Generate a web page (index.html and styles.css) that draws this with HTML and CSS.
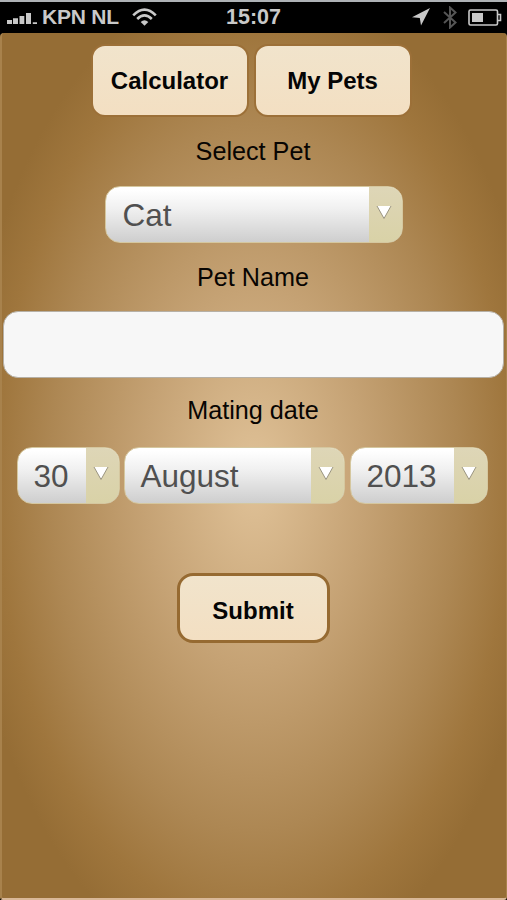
FILE: index.html
```html
<!DOCTYPE html>
<html lang="en">
<head>
<meta charset="utf-8">
<title>Pet Calculator</title>
<link rel="stylesheet" href="styles.css">
</head>
<body>
<header class="status">
  <div class="carrier">
    <svg class="signal" width="31" height="14" viewBox="0 0 31 14" fill="currentColor"><path d="M0 10h5v5H0zM6 8.200h5V14H6zM12.500 6h4.800v8h-4.800zM19 3h5v11h-5zM25.800 12.200H30V14h-4.200z"/></svg>
    <span>KPN NL</span>
    <svg class="wifi" width="25" height="18" viewBox="0 0 25 18" fill="none" stroke="currentColor" stroke-width="2.600"><path d="M1.200 7.300Q12.500-3.900 23.800 7.300M5.200 11Q12.500 3.800 19.800 11"/><path d="M8.700 14.100Q12.500 10.200 16.300 14.100L12.500 17.700Z" fill="currentColor" stroke="none"/></svg>
  </div>
  <time class="clock">15:07</time>
  <div class="indicators">
    <svg width="18" height="18" viewBox="0 0 18 18" fill="currentColor"><path d="M18 0L9 17.500L7.800 10L0 9.200Z"/></svg>
    <svg class="bluetooth" width="14" height="23" viewBox="0 0 14 23" fill="none" stroke="currentColor" stroke-width="2"><path d="M1 6L12.500 16.500L7 21.500V1.500L12.500 6.500L1 17"/></svg>
    <svg width="34" height="17" viewBox="0 0 34 17"><rect x="1" y="1" width="28.500" height="15" rx="1.500" fill="none" stroke="currentColor" stroke-width="1.600"/><path d="M4 4h11v9H4z" fill="currentColor"/><path d="M30 5.500h2.500v6H30" fill="none" stroke="currentColor" stroke-width="1.600"/></svg>
  </div>
</header>
<main class="screen">
  <nav class="tabs">
    <button class="btn">Calculator</button>
    <button class="btn">My Pets</button>
  </nav>
  <div class="label pet-label">Select Pet</div>
  <div class="select pet"><span class="value">Cat</span><span class="arrow"><svg width="16" height="15" viewBox="0 0 16 15"><path d="M1 1h14L8 13.500Z"/><path class="edge" d="M1 1L8 13.500L15 1"/></svg></span></div>
  <div class="label name-label">Pet Name</div>
  <input class="name" type="text" aria-label="Pet Name">
  <div class="label date-label">Mating date</div>
  <div class="dates">
    <div class="select day"><span class="value">30</span><span class="arrow"><svg width="16" height="15" viewBox="0 0 16 15"><path d="M1 1h14L8 13.500Z"/><path class="edge" d="M1 1L8 13.500L15 1"/></svg></span></div>
    <div class="select month"><span class="value">August</span><span class="arrow"><svg width="16" height="15" viewBox="0 0 16 15"><path d="M1 1h14L8 13.500Z"/><path class="edge" d="M1 1L8 13.500L15 1"/></svg></span></div>
    <div class="select year"><span class="value">2013</span><span class="arrow"><svg width="16" height="15" viewBox="0 0 16 15"><path d="M1 1h14L8 13.500Z"/><path class="edge" d="M1 1L8 13.500L15 1"/></svg></span></div>
  </div>
  <button class="btn submit">Submit</button>
</main>
</body>
</html>
```
FILE: styles.css
```css
* { box-sizing: border-box; }
body {
  margin: 0;
  height: 900px;
  overflow: hidden;
  background: #000;
  font-family: "Liberation Sans", Arial, sans-serif;
}
.status {
  display: grid;
  grid-template-columns: 1fr auto 1fr;
  align-items: center;
  height: 33px;
  padding: 0 5px 1px 7px;
  border-top: 2px solid #aeb2b5;
  color: #c9c9c9;
  font-size: 21px;
  font-weight: bold;
  line-height: 30px;
}
.carrier, .indicators { display: flex; align-items: center; }
.carrier { letter-spacing: -0.2px; }
.signal { margin: 0 4px 0 0; }
.wifi { margin-left: 13px; }
.clock { font-size: 21.5px; margin-right: 2px; }
.indicators { justify-content: flex-end; gap: 11px; }
.indicators svg:first-child { margin-right: 2px; }
.bluetooth { color: #555; }
.screen {
  display: flex;
  flex-direction: column;
  align-items: center;
  height: 867px;
  padding: 11px 2px 0 0;
  border: solid #a8824c;
  border-width: 0 1px 0 2px;
  border-bottom: 2px solid #d9b898;
  border-radius: 4px 4px 3px 3px;
  background: radial-gradient(ellipse 292px 505px at 50% 51.5%, #e0c298 0%, #c5a274 38%, #ad8753 70%, #9f763d 88%, #956d35 100%);
}
.tabs { display: flex; gap: 6px; margin-right: 4px; }
.btn {
  width: 157px;
  height: 73px;
  padding: 0;
  border: 2px solid #966a31;
  border-radius: 14px;
  background: linear-gradient(#f1e4cc, #f3dfc2);
  color: #050505;
  font: bold 24px "Liberation Sans", Arial, sans-serif;
}
.tabs .btn { width: 158px; border-color: #9c7038; margin: 0 -0.5px; }
.label { height: 30px; font-size: 25.2px; line-height: 30px; color: #080502; }
.pet-label { margin-top: 19px; }
.select {
  display: flex;
  height: 57px;
  border: 1px solid #d5c79f;
  border-radius: 15px;
  overflow: hidden;
  background: linear-gradient(#fff 5%, #f0f0f0 40%, #cecece);
  color: #505050;
  font-size: 31.5px;
  line-height: 56px;
}
.value { flex: 1; padding-left: 16px; }
.arrow {
  width: 33px;
  padding: 18px 0 0 7px;
  background: linear-gradient(#ded6b7, #d9d2a7);
  line-height: 0;
}
.arrow path { fill: #fff; }
.arrow .edge { fill: none; stroke: #9a9480; stroke-width: 1; }
.pet { width: 298px; margin: 20px 0 0 1px; }
.pet .value { padding-left: 17px; }
.name-label { margin-top: 19px; }
.name {
  width: 501px;
  height: 67px;
  margin-top: 19px;
  padding: 0 14px;
  border: 1px solid #b6b0a6;
  border-radius: 15px;
  background: #f7f7f7;
  font: 32px "Liberation Sans", Arial, sans-serif;
}
.date-label { margin-top: 17px; }
.dates { display: flex; margin: 22px 2px 0 0; }
.day { width: 103px; margin-right: 4px; }
.month { width: 221px; margin-right: 5px; }
.year { width: 138px; }
.submit { width: 153px; height: 70px; margin-top: 69px; padding-top: 6px; border-width: 3px; border-radius: 16px; }
```
